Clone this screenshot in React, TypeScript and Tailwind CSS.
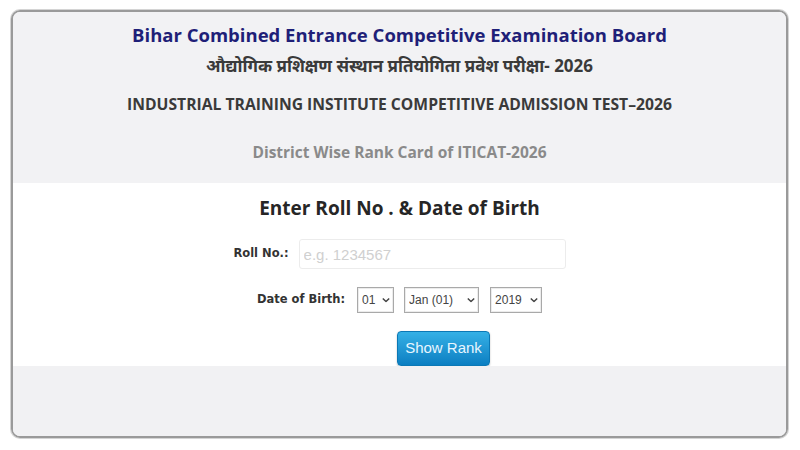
import React, { useState } from 'react';

const days = Array.from({ length: 31 }, (_, i) => String(i + 1).padStart(2, '0'));
const months = ['Jan', 'Feb', 'Mar', 'Apr', 'May', 'Jun', 'Jul', 'Aug', 'Sep', 'Oct', 'Nov', 'Dec'].map(
  (m, i) => `${m} (${String(i + 1).padStart(2, '0')})`
);
const years = Array.from({ length: 20 }, (_, i) => String(2019 - i));

function Chevron() {
  return (
    <svg
      viewBox="0 0 10 6"
      className="pointer-events-none absolute right-[4px] top-1/2 -translate-y-1/2 w-[8px] h-[5px]"
    >
      <path d="M1 1 L5 5 L9 1" fill="none" stroke="#444" strokeWidth="1.8" />
    </svg>
  );
}

interface SelProps {
  value: string;
  options: string[];
  onChange: (v: string) => void;
  className: string;
}

function Sel({ value, options, onChange, className }: SelProps) {
  return (
    <div className={'relative ' + className}>
      <select
        value={value}
        onChange={(e) => onChange(e.target.value)}
        className="appearance-none w-full h-[26px] border border-[#a9a9a9] bg-white pl-[4px] pr-[14px] text-[12px] text-[#444] font-['Liberation_Sans_Narrow','Liberation_Sans',Arial,sans-serif] shadow-[inset_0_0_0_1px_#ececec] outline-none"
      >
        {options.map((o) => (
          <option key={o}>{o}</option>
        ))}
      </select>
      <Chevron />
    </div>
  );
}

// Rank card lookup: header band, form band, empty footer band inside one bordered card.
export default function App() {
  const [roll, setRoll] = useState('');
  const [day, setDay] = useState('01');
  const [month, setMonth] = useState(months[0]);
  const [year, setYear] = useState('2019');

  return (
    <div className="w-[800px] h-[450px] bg-white pt-[10px] px-[11px] font-['Open_Sans','Noto_Sans',sans-serif]">
      <div className="w-[777px] h-[428px] rounded-[9px] border-2 border-[#9a9a9a] shadow-[0_0_0_1px_#d4d4d4] overflow-hidden flex flex-col">
        <header className="h-[171px] bg-[#f2f2f4] flex flex-col items-center pt-[10px]">
          <h1 className="text-[18.5px] leading-[26px] font-bold text-[#1f1f78]">
            Bihar Combined Entrance Competitive Examination Board
          </h1>
          <h2 className="mt-[6px] text-[17px] leading-[24px] font-bold text-[#3a3a3a] font-['Noto_Sans','Open_Sans',sans-serif]">
            औद्योगिक प्रशिक्षण संस्थान प्रतियोगिता प्रवेश परीक्षा- 2026
          </h2>
          <h3 className="mt-[15px] text-[15.7px] leading-[22px] font-bold text-[#3a3a3a]">
            INDUSTRIAL TRAINING INSTITUTE COMPETITIVE ADMISSION TEST–2026
          </h3>
          <p className="mt-[26px] text-[15.5px] leading-[22px] font-bold text-[#8a8a8a]">
            District Wise Rank Card of ITICAT-2026
          </p>
        </header>

        <section className="h-[183px] bg-white flex flex-col items-center pt-[12px]">
          <h4 className="text-[19px] leading-[26px] font-bold text-[#262626]">Enter Roll No . &amp; Date of Birth</h4>

          <div className="mt-[18px] flex items-center justify-center gap-[10px]">
            <label className="text-[11.5px] font-bold text-[#333] font-['DejaVu_Sans',Verdana,sans-serif]">Roll No.:</label>
            <input
              value={roll}
              onChange={(e) => setRoll(e.target.value)}
              placeholder="e.g. 1234567"
              className="w-[267px] h-[30px] rounded-[3px] border border-[#ececec] px-[4px] text-[15px] text-[#333] placeholder:text-[#d0d0d0] outline-none font-['Liberation_Sans',Arial,sans-serif]"
            />
          </div>

          <div className="mt-[17px] flex items-center justify-center">
            <label className="text-[11.5px] font-bold text-[#333] mr-[12px] font-['DejaVu_Sans',Verdana,sans-serif]">
              Date of Birth:
            </label>
            <Sel value={day} options={days} onChange={setDay} className="w-[37px]" />
            <Sel value={month} options={months} onChange={setMonth} className="w-[75px] ml-[10px]" />
            <Sel value={year} options={years} onChange={setYear} className="w-[52px] ml-[11px]" />
          </div>

          <button
            type="button"
            className="mt-[18px] ml-[88px] w-[93px] h-[35px] rounded-[4px] border border-[#0b78b5] bg-gradient-to-b from-[#34b0e6] to-[#0a7fc2] text-[15px] text-[#e8f6ff] font-['Liberation_Sans',Arial,sans-serif] shadow-[0_1px_2px_rgba(0,0,0,0.25)]"
          >
            Show Rank
          </button>
        </section>

        <footer className="flex-1 bg-[#f1f1f3]" />
      </div>
    </div>
  );
}
